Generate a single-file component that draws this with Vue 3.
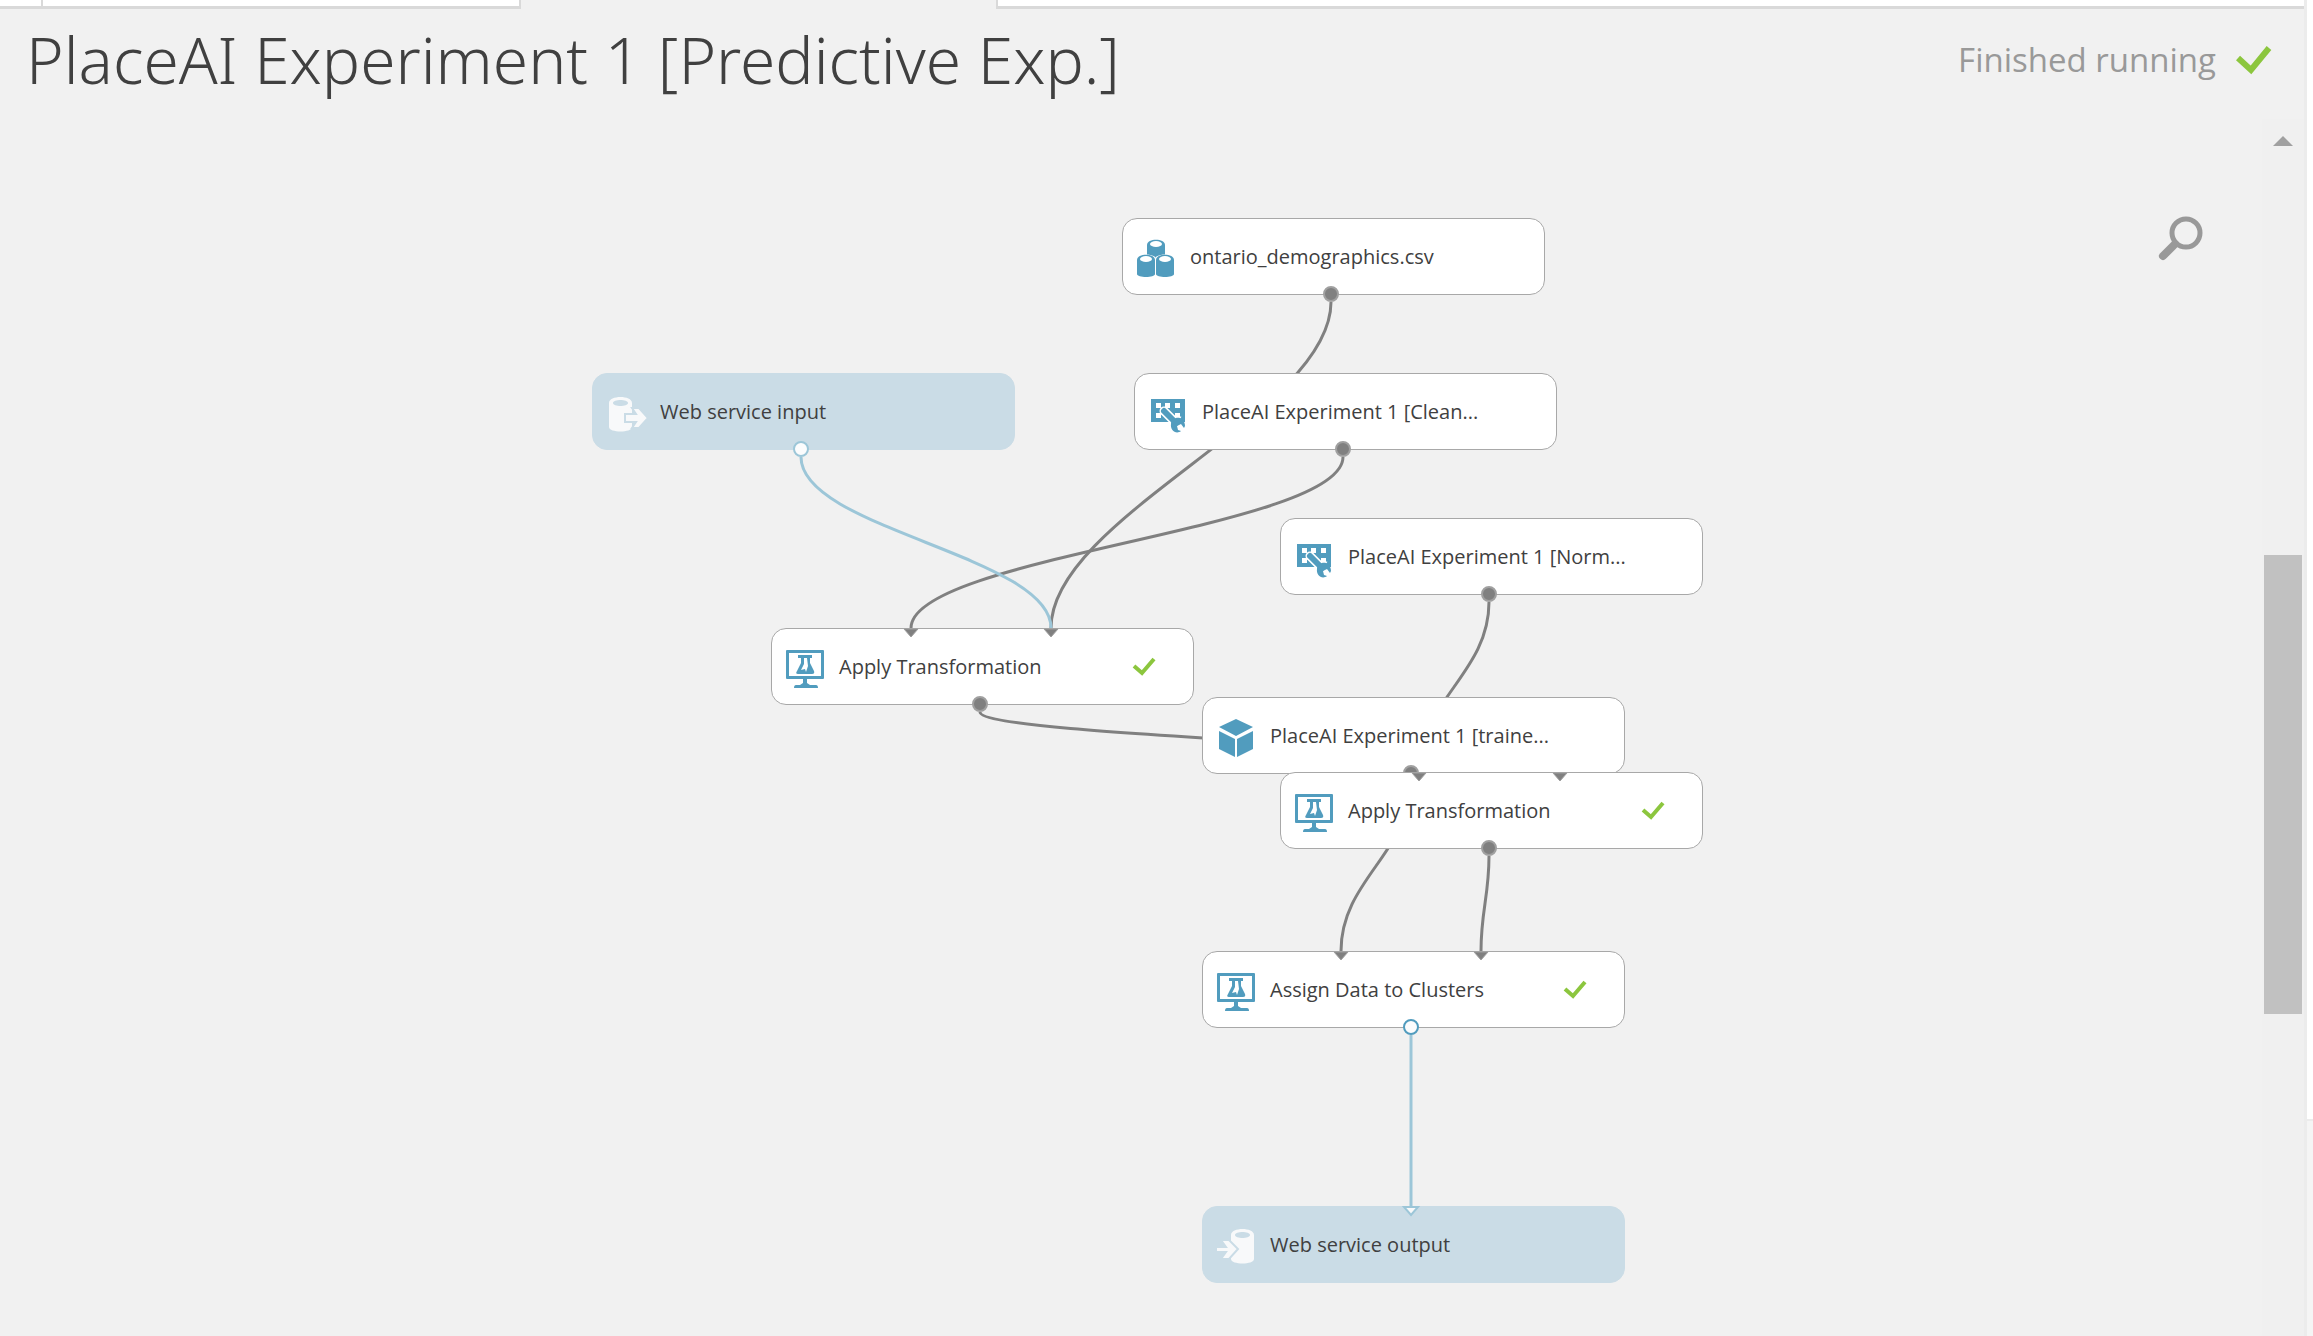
<script setup>
const H = 76

const nodes = [
  { id: 'csv', x: 1122, y: 218, label: 'ontario_demographics.csv', icon: 'data', out: 'solid' },
  { id: 'clean', x: 1134, y: 373, label: 'PlaceAI Experiment 1 [Clean...', icon: 'transform', out: 'solid' },
  { id: 'input', x: 592, y: 373, label: 'Web service input', icon: 'input', service: true, out: 'open' },
  { id: 'norm', x: 1280, y: 518, label: 'PlaceAI Experiment 1 [Norm...', icon: 'transform', out: 'solid' },
  { id: 'apply1', x: 771, y: 628, label: 'Apply Transformation', icon: 'module', done: true, ins: [140, 280], out: 'solid' },
  { id: 'trained', x: 1202, y: 697, label: 'PlaceAI Experiment 1 [traine...', icon: 'cube', out: 'solid' },
  { id: 'apply2', x: 1280, y: 772, label: 'Apply Transformation', icon: 'module', done: true, ins: [139, 280], out: 'solid' },
  { id: 'assign', x: 1202, y: 951, label: 'Assign Data to Clusters', icon: 'module', done: true, ins: [139, 279], out: 'open' },
  { id: 'output', x: 1202, y: 1206, label: 'Web service output', icon: 'output', service: true, ins: [209] }
]

const links = [
  { from: 'csv', to: 'apply1', port: 1 },
  { from: 'clean', to: 'apply1', port: 0 },
  { from: 'input', to: 'apply1', port: 1, service: true },
  { from: 'norm', to: 'apply2', port: 0 },
  { from: 'apply1', to: 'apply2', port: 1 },
  { from: 'trained', to: 'assign', port: 0 },
  { from: 'apply2', to: 'assign', port: 1 },
  { from: 'assign', to: 'output', port: 0, service: true }
]

const find = (id) => nodes.find((n) => n.id === id)

// Links leave from the lower edge of the output port and bend at most 111px from either end.
function curve(link) {
  const a = find(link.from)
  const b = find(link.to)
  const x1 = a.x + 209
  const y1 = a.y + H + 8
  const x2 = b.x + b.ins[link.port]
  const y2 = b.y
  const d = Math.min((y2 - y1) * 0.42, 111)
  return `M${x1} ${y1}C${x1} ${y1 + d} ${x2} ${y2 - d} ${x2} ${y2}`
}
</script>

<template>
  <div class="app">
    <div class="workspace">
      <div class="tabs">
        <span class="tab first"></span>
        <span class="tab second"></span>
        <span class="tab current"></span>
        <span class="tab rest"></span>
      </div>
      <header class="header">
        <h1>PlaceAI Experiment 1 [Predictive Exp.]</h1>
        <div class="status">
          <span>Finished running</span>
          <svg width="36" height="30" viewBox="0 0 36 30" aria-hidden="true"><path d="M2 13L15 25L33 3" fill="none" stroke="#8cc63e" stroke-width="6" /></svg>
        </div>
      </header>

      <main class="canvas">
        <svg class="links" aria-hidden="true">
          <path v-for="l in links" :key="l.from" :d="curve(l)" :class="{ service: l.service }" />
        </svg>

        <div
          v-for="n in nodes"
          :key="n.id"
          class="node"
          :class="{ service: n.service }"
          :style="{ left: n.x + 'px', top: n.y + 'px' }"
        >
          <svg class="icon" width="40" height="40" viewBox="0 0 40 40" aria-hidden="true">
            <g v-if="n.icon === 'data'" fill="#519cbe">
              <g v-for="(p, i) in [[11, 0], [1, 15], [20, 15]]" :key="i" :transform="`translate(${p[0]} ${p[1]})`">
                <path d="M-1 5C-1 -1 19 -1 19 5V20C19 25 -1 25 -1 20Z" fill="#fff" />
                <path d="M0 6C0 -1 18 -1 18 6V20C18 24 0 24 0 20Z" />
                <ellipse cx="9" cy="5" rx="6" ry="3" fill="#fff" />
              </g>
            </g>
            <g v-else-if="n.icon === 'transform'" transform="translate(-1 1)">
              <path d="M4 4H38V27H4Z" fill="#519cbe" />
              <path d="M9 8h5v5H9zM18 8h5v5h-5zM28 8h5v5h-5zM9 18h5v5H9zM28 18h5v5h-5z" fill="#fff" />
              <path d="M17 16L29 28" stroke="#fff" stroke-width="9" stroke-linecap="round" />
              <circle cx="31" cy="30" r="9" fill="#fff" />
              <path d="M31 27H38V21H35Z" fill="#519cbe" />
              <path d="M17 16L29 28" stroke="#519cbe" stroke-width="6" stroke-linecap="round" />
              <path d="M24 29C24 24 29 22 33 23C36 24 38 27 38 31L37 33L34 29L30 31L31 35L34 36C29 40 23 35 24 29Z" fill="#519cbe" />
            </g>
            <g v-else-if="n.icon === 'module'" fill="#519cbe">
              <path fill-rule="evenodd" d="M2 1H38Q39 1 39 2V29Q39 30 38 30H2Q1 30 1 29V2Q1 1 2 1ZM4 4V27H36V4Z" />
              <path d="M18 29H22V34L25 36H31Q33 36 33 39H9Q9 36 11 36H15L18 34Z" />
              <path fill-rule="evenodd" d="M13 6H27V9H25V14L29 22Q30 25 27 25H13Q10 25 12 22L16 14V9H13ZM19 9V15L16 21L20 20L21 23L23 17L22 9Z" />
            </g>
            <g v-else-if="n.icon === 'cube'" fill="#519cbe">
              <path d="M20 1L37 9L20 18L3 9ZM3 13L19 21V39L3 31ZM37 13L21 21V39L37 31Z" />
            </g>
            <g v-else-if="n.icon === 'input'" fill="#f8f9fa">
              <path fill-rule="evenodd" d="M3 9C3 1 26 1 26 9V33C26 39 3 39 3 33ZM7 9C7 13 22 13 22 9S7 5 7 9Z" />
              <path d="M19 20H30L26 14H33L42 24L33 34H26L30 28H19Z" stroke="#cadce6" stroke-width="2" />
            </g>
            <g v-else fill="#f8f9fa">
              <path fill-rule="evenodd" d="M15 8C15 0 38 0 38 8V32C38 38 15 38 15 32ZM19 8C19 12 34 12 34 8S19 4 19 8Z" />
              <path d="M0 20H10L5 13H13L22 22L13 32H5L10 25H0Z" stroke="#cadce6" stroke-width="2" />
            </g>
          </svg>
          <span class="label">{{ n.label }}</span>
          <svg v-if="n.done" class="check" width="24" height="20" viewBox="0 0 24 20" aria-hidden="true"><path d="M2 9L10 16L22 2" fill="none" stroke="#8cc63e" stroke-width="4" /></svg>
          <svg class="ports" width="422" height="96" viewBox="0 -10 422 96" aria-hidden="true">
            <path
              v-for="p in n.ins || []"
              :key="p"
              :d="`M${p - 7} 1H${p + 7}L${p} 9Z`"
              :fill="n.service ? '#f8f9fa' : '#808080'"
              :stroke="n.service ? '#9cc6d8' : '#a0a0a0'"
              :stroke-width="n.service ? 2 : 1"
            />
            <circle
              v-if="n.out"
              cx="209"
              :cy="H"
              r="7"
              stroke-width="2"
              :fill="n.out === 'solid' ? '#808080' : '#fbfcfd'"
              :stroke="n.out === 'solid' ? '#a0a0a0' : n.service ? '#9cc6d8' : '#519cbe'"
            />
          </svg>
        </div>

        <button class="search" type="button" aria-label="Search">
          <svg width="46" height="46" viewBox="0 0 46 46" fill="none" stroke="#999">
            <circle cx="29" cy="17" r="14" stroke-width="5" />
            <path d="M18 28L6 40" stroke-width="8" stroke-linecap="round" />
          </svg>
        </button>

        <div class="scrollbar">
          <span class="arrow"></span>
          <span class="thumb"></span>
        </div>
      </main>
    </div>
    <aside class="side">
      <div class="panel"></div>
      <div class="panel lower"></div>
    </aside>
  </div>
</template>

<style>
body {
  background: #f1f1f1;
}
</style>

<style scoped>
.app {
  display: flex;
  min-height: 100vh;
  overflow: hidden;
  background: #f1f1f1;
  font-family: "Open Sans", "Noto Sans", sans-serif;
  color: #404040;
}
.workspace {
  flex: 1;
  min-width: 0;
  display: flex;
  flex-direction: column;
}
.tabs {
  display: flex;
  height: 9px;
}
.tab {
  box-sizing: border-box;
  background: #fff;
  border-bottom: 3px solid #d9d9d9;
}
.first {
  width: 41px;
}
.second {
  width: 480px;
  border-left: 2px solid #d9d9d9;
  border-right: 2px solid #d9d9d9;
}
.current {
  width: 475px;
  background: none;
  border: 0;
}
.rest {
  flex: 1;
  border-left: 2px solid #d9d9d9;
}
.header {
  display: flex;
  justify-content: space-between;
  align-items: center;
  height: 110px;
  box-sizing: border-box;
  padding: 0 32px 8px 26px;
}
h1 {
  margin: 0;
  font-family: "Noto Sans", "Open Sans", sans-serif;
  font-size: 64px;
  line-height: 92px;
  font-weight: 300;
  white-space: nowrap;
}
.status {
  display: flex;
  align-items: center;
  gap: 20px;
  font-size: 33px;
  line-height: 48px;
  color: #999;
}
.canvas {
  position: relative;
  flex: 1;
  margin-top: -119px;
  padding-top: 119px;
  display: flex;
  justify-content: flex-end;
  align-items: flex-start;
}
.links {
  position: absolute;
  left: 0;
  top: 0;
  width: 100%;
  height: 100%;
  fill: none;
  stroke: #808080;
  stroke-width: 3;
}
.links .service {
  stroke: #9cc6d8;
}
.node {
  position: absolute;
  box-sizing: border-box;
  width: 423px;
  height: 77px;
  display: flex;
  align-items: center;
  padding: 1px 37px 0 13px;
  border: 1px solid #a8a8a8;
  border-radius: 15px;
  background: #fff;
}
.node.service {
  background: #cadce6;
  border-color: #cadce6;
}
.icon {
  flex: none;
  margin-top: 4px;
  overflow: visible;
}
.label {
  flex: 1;
  margin-left: 14px;
  font-size: 20px;
  line-height: 28px;
  white-space: nowrap;
}
.ports {
  position: absolute;
  left: -1px;
  top: -11px;
}
.search {
  margin: 97px 59px 0 0;
  padding: 0;
  border: 0;
  background: none;
  line-height: 0;
}
.scrollbar {
  align-self: stretch;
  width: 42px;
  background: #f0f0f0;
  display: flex;
  flex-direction: column;
  align-items: center;
}
.arrow {
  margin-top: 17px;
  border: 10px solid transparent;
  border-top: 0;
  border-bottom-color: #a0a0a0;
}
.thumb {
  width: 38px;
  height: 459px;
  margin-top: 409px;
  background: #c1c1c1;
}
.side {
  width: 9px;
  display: flex;
  flex-direction: column;
}
.panel {
  flex: 1119;
  background: #fff;
  border-left: 3px solid #ececec;
}
.lower {
  flex: 215;
  background: #f5f5f5;
  border-top: 2px solid #ececec;
}
</style>
